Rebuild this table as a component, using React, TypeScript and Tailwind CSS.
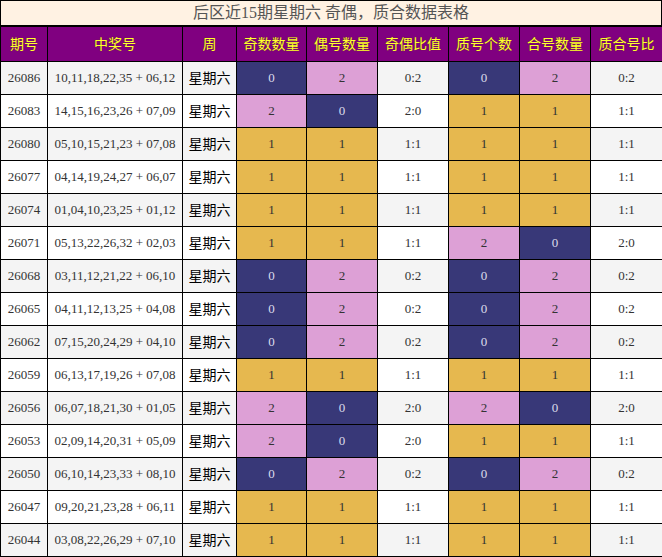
const rows: [string, string, number, number, number, number][] = [
  ['26086', '10,11,18,22,35 + 06,12', 0, 2, 0, 2],
  ['26083', '14,15,16,23,26 + 07,09', 2, 0, 1, 1],
  ['26080', '05,10,15,21,23 + 07,08', 1, 1, 1, 1],
  ['26077', '04,14,19,24,27 + 06,07', 1, 1, 1, 1],
  ['26074', '01,04,10,23,25 + 01,12', 1, 1, 1, 1],
  ['26071', '05,13,22,26,32 + 02,03', 1, 1, 2, 0],
  ['26068', '03,11,12,21,22 + 06,10', 0, 2, 0, 2],
  ['26065', '04,11,12,13,25 + 04,08', 0, 2, 0, 2],
  ['26062', '07,15,20,24,29 + 04,10', 0, 2, 0, 2],
  ['26059', '06,13,17,19,26 + 07,08', 1, 1, 1, 1],
  ['26056', '06,07,18,21,30 + 01,05', 2, 0, 2, 0],
  ['26053', '02,09,14,20,31 + 05,09', 2, 0, 1, 1],
  ['26050', '06,10,14,23,33 + 08,10', 0, 2, 0, 2],
  ['26047', '09,20,21,23,28 + 06,11', 1, 1, 1, 1],
  ['26044', '03,08,22,26,29 + 07,10', 1, 1, 1, 1],
];

const headers = ['期号', '中奖号', '周', '奇数数量', '偶号数量', '奇偶比值', '质号个数', '合号数量', '质合号比'];
const widths = ['w-[47px]', 'w-[135px]', 'w-[54px]', 'w-[70px]', 'w-[71px]', 'w-[71px]', 'w-[71px]', 'w-[71px]', 'w-[72px]'];

const font = "font-['Liberation_Serif','Noto_Sans_CJK_SC',serif]";
const cjk = "font-['Noto_Sans_CJK_SC',sans-serif]";

function CountCell({ value }: { value: number }) {
  const tone =
    value === 0
      ? 'bg-[#383878] text-[#dcdcec]'
      : value === 2
        ? 'bg-[#dda0d6] text-[#333]'
        : 'bg-[#e6b84f] text-[#333]';
  return <td className={`border border-black text-center text-[13px] ${tone}`}>{value}</td>;
}

export default function App() {
  return (
    <div className={`w-[662px] bg-white ${font}`}>
      <div className="flex h-[27px] items-center justify-center border border-b-2 border-black bg-[#fff2e3] text-[16px] text-[#555]">
        后区近15期星期六 奇偶，质合数据表格
      </div>
      <table className="w-[662px] table-fixed border-collapse">
        <colgroup>
          {widths.map((w, i) => (
            <col key={i} className={w} />
          ))}
        </colgroup>
        <thead>
          <tr className="h-[34px] bg-[#800080]">
            {headers.map((h) => (
              <th
                key={h}
                className={`border border-t-0 border-black text-center text-[14px] font-normal text-[#ffff33] [text-shadow:0_0_1px_#5a3a00] ${cjk}`}
              >
                {h}
              </th>
            ))}
          </tr>
        </thead>
        <tbody>
          {rows.map(([issue, nums, odd, even, prime, comp], i) => (
            <tr key={issue} className={`h-[33px] ${i % 2 === 0 ? 'bg-[#f4f4f4]' : 'bg-white'}`}>
              <td className="border border-black text-center text-[13px] text-[#333]">{issue}</td>
              <td className="border border-black text-center text-[13px] text-[#333]">{nums}</td>
              <td className={`border border-black text-center text-[14px] text-black ${cjk}`}>星期六</td>
              <CountCell value={odd} />
              <CountCell value={even} />
              <td className="border border-black text-center text-[13px] text-[#333]">
                {odd}:{even}
              </td>
              <CountCell value={prime} />
              <CountCell value={comp} />
              <td className="border border-black text-center text-[13px] text-[#333]">
                {prime}:{comp}
              </td>
            </tr>
          ))}
        </tbody>
      </table>
    </div>
  );
}
